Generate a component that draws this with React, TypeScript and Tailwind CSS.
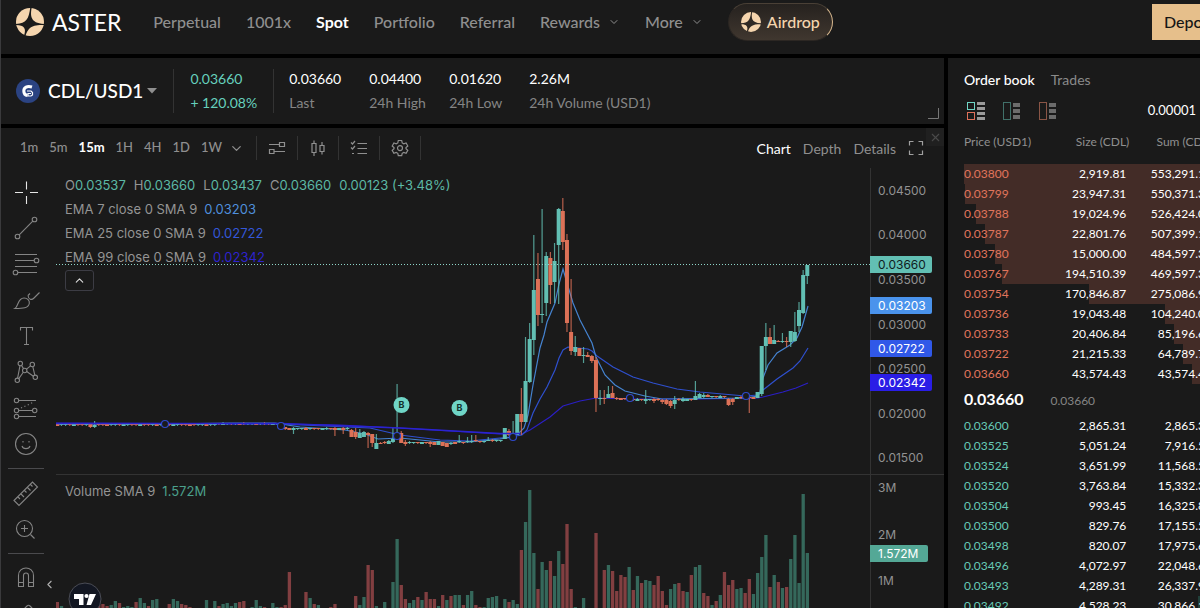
import React, { useState } from 'react';
import { ChevronDown, ChevronUp, ChevronLeft, X } from 'lucide-react';

type Level = { price: string; size: string; sum: string };
// [index, high, body top, body bottom, low, up]
type Candle = [number, number, number, number, number, number];

const UP = '#62bfb3';
const DOWN = '#dc7157';
const STEP = 4.1436;
const FIRST_X = 1.3;
const TOP = 168;

const navItems = ['Perpetual', '1001x', 'Spot', 'Portfolio', 'Referral', 'Rewards', 'More'];

const stats = [
  { value: '0.03660', label: 'Last' },
  { value: '0.04400', label: '24h High' },
  { value: '0.01620', label: '24h Low' },
  { value: '2.26M', label: '24h Volume (USD1)' },
];

const intervals = ['1m', '5m', '15m', '1H', '4H', '1D', '1W'];

const asks: Level[] = [
  { price: '0.03800', size: '2,919.81', sum: '553,291.18' },
  { price: '0.03799', size: '23,947.31', sum: '550,371.37' },
  { price: '0.03788', size: '19,024.96', sum: '526,424.06' },
  { price: '0.03787', size: '22,801.76', sum: '507,399.10' },
  { price: '0.03780', size: '15,000.00', sum: '484,597.34' },
  { price: '0.03767', size: '194,510.39', sum: '469,597.34' },
  { price: '0.03754', size: '170,846.87', sum: '275,086.95' },
  { price: '0.03736', size: '19,043.48', sum: '104,240.08' },
  { price: '0.03733', size: '20,406.84', sum: '85,196.60' },
  { price: '0.03722', size: '21,215.33', sum: '64,789.76' },
  { price: '0.03660', size: '43,574.43', sum: '43,574.43' },
];

const bids: Level[] = [
  { price: '0.03600', size: '2,865.31', sum: '2,865.31' },
  { price: '0.03525', size: '5,051.24', sum: '7,916.55' },
  { price: '0.03524', size: '3,651.99', sum: '11,568.54' },
  { price: '0.03520', size: '3,763.84', sum: '15,332.38' },
  { price: '0.03504', size: '993.45', sum: '16,325.83' },
  { price: '0.03500', size: '829.76', sum: '17,155.59' },
  { price: '0.03498', size: '820.07', sum: '17,975.66' },
  { price: '0.03496', size: '4,072.97', sum: '22,048.63' },
  { price: '0.03493', size: '4,289.31', sum: '26,337.94' },
  { price: '0.03492', size: '4,528.23', sum: '30,866.17' },
];

// positive = up bar, negative = down bar
const volumes = [
  -6, 2, 0, 0, 3, -4, 5, 3, -2, 4, -3, -4, -2, 3, 7, -5, 1, 2, 1, -6,
  10, 5, -2, 8, 9, 0, 0, -4, 9, 7, -4, -3, -1, 0, 0, 0, 8, 0, 7, -2,
  4, 5, 2, 5, -6, -7, 0, 1, 8, 2, -1, 0, 5, 1, -1, -3, -36, 0, 0, 0,
  -16, 10, -4, 3, 0, 0, -1, -4, 0, 0, 0, 0, -12, 3, 11, -43, -38, 2, 0, 6,
  0, 26, 69, -23, -9, 5, 8, -11, 8, -16, -9, -9, 2, -13, 8, -12, 13, 13, -3, 13,
  17, -3, -1, 1, 10, 11, 12, 0, 9, -6, 8, 4, -58, 86, 118, 55, -19, 46, 38, -47,
  32, 57, -44, -84, -19, 1, 0, 10, 0, 0, -75, 0, -38, 43, -37, -17, -33, -31, 41, -18,
  32, -25, 28, 27, -23, -32, -17, -3, 19, 24, -25, -17, 16, -33, 41, 43, -15, -12, 3, -7,
  13, -36, -23, -28, 19, 20, -15, -29, 14, 35, 51, 73, -21, 33, -26, 20, -21, 49, 73, 25,
  114, 55,
];

const bigCandles: Candle[] = [
  [8, 424, 424, 427, 428, 0], [9, 421, 425, 427, 428, 1],
  [55, 427, 427, 429, 430, 0], [57, 427, 428, 430, 434, 1], [67, 427, 428, 430, 436, 0],
  [69, 427, 428, 430, 434, 0], [71, 429, 430, 437, 437, 0], [72, 428, 432, 437, 439, 0],
  [73, 429, 433, 438, 438, 1], [74, 431, 432, 437, 437, 1], [75, 432, 433, 435, 448, 0],
  [76, 434, 434, 443, 447, 0], [77, 434, 443, 449, 449, 1], [78, 442, 443, 444, 444, 0],
  [79, 441, 442, 443, 444, 0], [80, 440, 441, 444, 444, 1], [81, 428, 439, 442, 443, 1],
  [82, 384, 433, 439, 440, 1], [83, 431, 433, 443, 443, 0], [84, 440, 442, 444, 446, 0],
  [90, 441, 442, 444, 447, 0], [91, 442, 442, 445, 445, 0], [92, 441, 441, 445, 445, 1],
  [93, 442, 442, 446, 446, 0], [94, 443, 443, 447, 447, 0], [95, 442, 443, 444, 445, 1],
  [97, 435, 441, 442, 443, 1], [99, 437, 441, 442, 443, 1], [100, 435, 441, 442, 443, 1],
  [101, 435, 440, 441, 442, 0], [104, 437, 440, 441, 441, 1],
  [108, 428, 428, 439, 439, 1], [109, 429, 431, 435, 436, 0], [110, 421, 434, 435, 435, 1],
  [111, 414, 414, 435, 435, 1], [112, 388, 414, 422, 435, 0], [113, 337, 381, 422, 422, 1],
  [114, 323, 339, 382, 383, 1], [115, 235, 290, 340, 355, 1], [116, 253, 279, 315, 326, 0],
  [117, 209, 314, 315, 323, 1], [118, 252, 256, 303, 316, 1], [119, 252, 258, 285, 304, 0],
  [120, 243, 261, 282, 303, 1], [121, 208, 209, 245, 304, 1], [122, 198, 211, 242, 250, 0],
  [123, 234, 240, 323, 332, 0], [124, 279, 332, 351, 355, 0], [125, 336, 347, 352, 356, 1],
  [126, 348, 348, 356, 356, 0], [127, 347, 355, 356, 363, 1], [128, 352, 355, 357, 357, 0],
  [129, 355, 356, 361, 363, 0], [130, 357, 360, 398, 412, 0], [131, 390, 398, 399, 405, 1],
  [132, 390, 398, 399, 404, 0], [133, 386, 394, 398, 398, 1], [134, 386, 393, 398, 398, 0],
  [142, 390, 399, 401, 404, 1], [144, 398, 399, 401, 403, 0], [146, 399, 400, 402, 404, 0],
  [147, 399, 400, 404, 405, 0], [148, 400, 401, 406, 408, 0], [149, 396, 400, 404, 409, 1],
  [151, 397, 399, 401, 402, 1], [154, 381, 396, 400, 400, 1], [155, 393, 394, 398, 398, 1],
  [156, 393, 395, 397, 398, 1], [157, 394, 395, 397, 397, 0], [162, 398, 399, 405, 406, 0],
  [163, 398, 399, 402, 405, 0], [167, 397, 397, 398, 413, 0], [169, 392, 392, 398, 398, 1],
  [170, 346, 346, 394, 396, 1], [171, 323, 337, 346, 370, 1], [172, 328, 337, 344, 344, 0],
  [173, 325, 340, 344, 344, 1], [174, 340, 341, 342, 342, 0], [175, 333, 341, 342, 343, 1],
  [176, 337, 341, 342, 347, 0], [177, 331, 331, 342, 347, 1], [178, 312, 332, 341, 342, 1],
  [179, 302, 310, 326, 332, 1], [180, 270, 275, 313, 314, 1], [181, 265, 265, 276, 284, 1],
];

// quiet stretches between the larger moves
const baseline = (i: number) => {
  if (i < 55) return 424 - (i > 38 ? 1 : 0);
  if (i < 71) return 428;
  if (i < 96) return 442;
  if (i < 108) return 442 - Math.floor((i - 96) / 4);
  if (i < 155) return 398 + (i > 138 ? 1 : 0);
  if (i < 162) return 396;
  return 397;
};

const drawn = new Set(bigCandles.map((c) => c[0]));
const quietCandles: Candle[] = volumes
  .map((v, i): Candle => {
    const y = baseline(i);
    const tall = (i * 7) % 5 === 0 ? 1 : 0;
    return [i, y - tall, y, y + 1 + ((i * 3) % 4 === 0 ? 1 : 0), y + 2, v >= 0 && i % 3 !== 0 ? 1 : 0];
  })
  .filter((c) => !drawn.has(c[0]));

const candles = [...quietCandles, ...bigCandles];

const ema7 =
  'M56 424L165 424L230 423L275 423L300 427L345 430L365 434L378 439L400 438L440 442L470 442L500 439L512 437L518 434L524 428L528 415L533 385L540 348L544 335L547 322L555 303L559 284L563 269L567 283L573 303L580 320L592 343L596 357L605 375L615 385L625 391L645 396L662 399L745 398L758 396L760 392L763 378L768 365L777 353L790 345L797 338L802 327L808 306';
const ema25 =
  'M56 424L280 424L370 428L400 435L440 440L470 441L510 437L522 435L527 430L533 413L540 399L547 387L555 370L559 358L563 350L568 347L588 349L592 351L597 356L613 367L633 377L653 383L677 389L700 392L745 396L758 395L763 390L777 379L793 368L800 361L808 348';
const ema99 =
  'M56 423L280 424L340 425L400 428L450 431L500 434L522 434L530 430L550 417L563 406L580 401L596 398L630 399L700 399L758 398L763 397L783 392L796 388L808 383';

const handles = [[165, 424], [281, 426], [397, 436], [513, 437], [630, 398], [746, 396]];
const trades = [[401, 405], [459, 408]];

const axisLabels = [
  ['0.04500', 190], ['0.04000', 234], ['0.03500', 279], ['0.03000', 324], ['0.02500', 368],
  ['0.02000', 413], ['0.01500', 457], ['3M', 487], ['2M', 534], ['1M', 580],
] as [string, number][];

const axisTags = [
  { text: '0.03660', y: 264, w: 62, bg: '#62bfb3', fg: '#10201e' },
  { text: '0.03203', y: 305, w: 62, bg: '#4a93ec', fg: '#ffffff' },
  { text: '0.02722', y: 348, w: 62, bg: '#3058e8', fg: '#ffffff' },
  { text: '0.02342', y: 382, w: 62, bg: '#2a1de6', fg: '#ffffff' },
  { text: '1.572M', y: 553, w: 58, bg: '#54a896', fg: '#ffffff' },
];

const AsterMark = ({ className, hole }: { className: string; hole: string }) => (
  <svg className={className} viewBox="0 0 28 28" aria-hidden="true">
    <circle cx="14" cy="14" r="14" fill="#f5d5ae" />
    <path
      d="M14.2 0L15.6 0C14.4 7 13.9 15.3 28 15.9V17C15 17 12.6 19.5 9.4 28L8.1 27.6C10.4 20.5 8.5 17 0 17V15.9C10.5 15.3 12.7 11 14.2 0Z"
      fill={hole}
    />
  </svg>
);

const toolIcons: { name: string; art: React.ReactNode; color?: string }[] = [
  { name: 'Cross', color: '#e6e6e6', art: <path d="M14.5 3.5V11.5M14.5 18V26M3 14.5H11M18 14.5H26" /> },
  {
    name: 'Trend line',
    art: <><circle cx="5.5" cy="22.5" r="2.3" /><circle cx="22.5" cy="5.5" r="2.3" /><path d="M7.2 20.8L20.8 7.2" /></>,
  },
  {
    name: 'Fib retracement',
    art: <><path d="M3 4.5H25M3 10.5H22.2M3 16.5H25M5.8 22.5H25" /><circle cx="24.5" cy="10.5" r="2.3" /><circle cx="3.5" cy="22.5" r="2.3" /></>,
  },
  {
    name: 'Brush',
    art: <path d="M3 22.5C6.5 20.5 5.5 12 12 12C15.5 12 17.8 14.5 17.3 17.5C16.5 22 11 22.5 3 22.5ZM16 9.5C16.5 13.5 19.5 14.5 22 12L27.5 6.5M16 9.5L18 7.5" />,
  },
  { name: 'Text', art: <path d="M8.5 8.5V5.5H20.5V8.5M14.5 5.5V22.5M12 22.5H17" /> },
  {
    name: 'Pattern',
    art: (
      <>
        <circle cx="8.3" cy="5.5" r="2.2" /><circle cx="20.3" cy="6.5" r="2.2" />
        <circle cx="12.7" cy="12.5" r="2.2" /><circle cx="5.3" cy="22.3" r="2.2" /><circle cx="23.3" cy="19.3" r="2.2" />
        <path d="M8 7.7L5.6 20.1M9.5 7.4L11.5 10.6M14.5 11.2L18.6 7.8M20.8 8.7L22.8 17.1M6.8 20.6L11.3 14.3M14.7 13.5L21.4 18.2" />
      </>
    ),
  },
  {
    name: 'Forecast',
    art: (
      <>
        <circle cx="4.5" cy="6.5" r="2.2" /><circle cx="4.5" cy="16.5" r="2.2" />
        <circle cx="22.7" cy="16.5" r="2.2" /><circle cx="4.5" cy="22.5" r="2.2" />
        <path d="M6.7 6.5H24M6.7 16.5H20.5M6.7 22.5H24" />
        <path d="M9 14L22 8" strokeDasharray="1.2 2.5" />
      </>
    ),
  },
  {
    name: 'Icons',
    art: <><circle cx="14" cy="14" r="10.5" /><path d="M10 16C11 19.5 17 19.5 18 16M11 11V12.5M17 11V12.5" /></>,
  },
];

const lowerIcons: { name: string; art: React.ReactNode }[] = [
  {
    name: 'Measure',
    art: <path d="M2 21.5L20.5 3L25.5 8L7 26.5ZM6 18L8 20M9 15L12 18M12.5 11.5L14.5 13.5M15.5 8.5L18.5 11.5M18.5 5.5L20.5 7.5" />,
  },
  { name: 'Zoom in', art: <><circle cx="12.5" cy="13.5" r="8" /><path d="M18.5 19.5L22.5 23.5M12.5 10V17M9 13.5H16" /></> },
];

const ToolButton = ({ name, art, color = '#858585' }: { name: string; art: React.ReactNode; color?: string }) => (
  <button aria-label={name} className="flex h-9 w-full shrink-0 items-center justify-center">
    <svg width="28" height="28" viewBox="0 0 28 28" fill="none" stroke={color} strokeWidth="1.1">{art}</svg>
  </button>
);

const DrawingTools = () => (
  <div className="flex w-[50px] shrink-0 flex-col pt-[6px]">
    {toolIcons.map((t) => <ToolButton key={t.name} {...t} />)}
    <div className="mx-[7px] my-[6px] h-px shrink-0 bg-[#4a4a4d]" />
    {lowerIcons.map((t) => <ToolButton key={t.name} {...t} />)}
    <div className="mx-[7px] mt-[6px] mb-[5px] h-px shrink-0 bg-[#4a4a4d]" />
    <ToolButton
      name="Magnet"
      art={<path d="M6.5 23.5V12.5C6.5 2.5 21.5 2.5 21.5 12.5V23.5H16.5V12.5C16.5 9.2 11.5 9.2 11.5 12.5V23.5ZM6.5 19.5H11.5M16.5 19.5H21.5" />}
    />
    <ToolButton name="Draw" art={<path d="M5 22L6 16L15 7C16 6 17 6 18 7L19.5 8.5C20.5 9.5 20.5 10.5 19.5 11.5L11 20M13 9L18 14" />} />
  </div>
);

const Plot = () => (
  <svg className="absolute inset-0 h-full w-full" aria-label="Price chart">
    <g transform={`translate(0 ${-TOP})`}>
      {volumes.map((v, i) => (
        <rect key={i} x={FIRST_X + i * STEP - 1.6} y={608 - Math.abs(v)} width="3.3" height={Math.abs(v)} fill={v > 0 ? '#35685b' : '#823f41'} />
      ))}
      <g transform="translate(-56 0)">
        <path d={ema99} fill="none" stroke="#2b1fc4" strokeWidth="1.2" />
        <path d={ema25} fill="none" stroke="#2f50cf" strokeWidth="1.2" />
        <path d={ema7} fill="none" stroke="#4583d0" strokeWidth="1.2" />
      </g>
      {candles.map(([i, high, top, bottom, low, up]) => {
        const x = FIRST_X + i * STEP;
        return (
          <g key={i} fill={up ? UP : DOWN}>
            <rect x={x - 0.6} y={high} width="1.2" height={low - high} opacity="0.8" />
            <rect x={x - 2} y={top} width="4" height={Math.max(bottom - top, 1)} />
          </g>
        );
      })}
      <g transform="translate(-56 0)">
        <path d="M56 423.5H281L400 428L500 433.500H520" fill="none" stroke="#2b23d0" strokeWidth="1.4" />
        {handles.map(([x, y]) => (
          <circle key={x} cx={x} cy={y} r="3.5" fill="#1a1a1a" stroke="#2f49cc" strokeWidth="1.2" />
        ))}
        {trades.map(([x, y]) => (
          <g key={x}>
            <circle cx={x + 0.5} cy={y} r="8" fill="#6fd5c6" />
            <text x={x + 0.5} y={y + 3} textAnchor="middle" fontSize="9" fontWeight="700" fill="#12302b" fontFamily="Inter, sans-serif">B</text>
          </g>
        ))}
      </g>
      <line x1="0" x2="100%" y1="264.5" y2="264.5" stroke="#8fd6c9" strokeDasharray="1 2" />
      <line x1="0" x2="100%" y1="474.5" y2="474.5" stroke="#333333" />
    </g>
  </svg>
);

const PriceAxis = () => (
  <svg className="h-full w-[74px] shrink-0" fontFamily="Inter, sans-serif" fontSize="12" aria-label="Price axis">
    <g transform={`translate(0 ${-TOP})`}>
      <path d="M0.5 168V608M0 474.5H74" stroke="#333333" fill="none" />
      {axisLabels.map(([text, y]) => (
        <text key={text} x="8" y={y + 5} fill="#929292">{text}</text>
      ))}
      {axisTags.map((t) => (
        <g key={t.text}>
          <path d={`M0 ${t.y - 8}H${t.w - 2}q2 0 2 2v13q0 2 -2 2H0Z`} fill={t.bg} />
          <text x="8" y={t.y + 5} fill={t.fg}>{t.text}</text>
        </g>
      ))}
    </g>
  </svg>
);

const ohlc = [['O', '0.03537'], ['H', '0.03660'], ['L', '0.03437'], ['C', '0.03660']];

const Legend = () => (
  <div className="absolute top-[6px] left-[9px] font-['Inter',sans-serif] text-[13px] text-[#949494]">
    <div className="flex h-6 items-center gap-2 text-[#5cb8a5]">
      {ohlc.map(([k, v]) => (
        <span key={k}><span className="text-[#949494]">{k}</span>{v}</span>
      ))}
      <span>0.00123 (+3.48%)</span>
    </div>
    <div className="flex h-6 items-center gap-[7px]">EMA 7 close 0 SMA 9 <span className="text-[#4f8fdc]">0.03203</span></div>
    <div className="flex h-6 items-center gap-[7px]">EMA 25 close 0 SMA 9 <span className="text-[#3457d8]">0.02722</span></div>
    <div className="flex h-6 items-center gap-[7px]">EMA 99 close 0 SMA 9 <span className="text-[#2e22cc]">0.02342</span></div>
    <button aria-label="Collapse legend" className="flex h-[21px] w-[29px] items-center justify-center rounded-[3px] border border-[#3c3c44] text-[#dcdcdc]">
      <ChevronUp size={13} />
    </button>
  </div>
);

const toolbarIcons: { name: string; art: React.ReactNode }[] = [
  { name: 'Indicators', art: <path d="M1 5.5H11.5M11.5 3.5H16.5V7.5H11.5ZM6.5 12.5H17M1.5 10.5H6V14.5H1.5Z" /> },
  { name: 'Candles', art: <path d="M3 4.5H7V13.5H3ZM5 1.5V4.5M5 13.5V17M11 6.5H15V12.5H11ZM13 3V6.5M13 12.5V15.5" /> },
  { name: 'Display', art: <path d="M1 3.5L2.5 5L5 2M1 8.5L2.5 10L5 7M7.5 4.5H17M7.5 9.5H17M7.5 14.5H17M2 14.5H4" /> },
  {
    name: 'Settings',
    art: (
      <>
        <path d="M7.3 1.5H10.7L11.2 3.9L12.8 4.8L15.1 4L16.8 7L15 8.6V9.7L16.8 11.3L15.1 14.2L12.8 13.4L11.2 14.3L10.7 16.7H7.3L6.8 14.3L5.2 13.4L2.9 14.2L1.2 11.3L3 9.7V8.6L1.2 7L2.9 4L5.2 4.8L6.8 3.9Z" />
        <circle cx="9" cy="9.1" r="2.5" />
      </>
    ),
  },
];

const ChartPanel = () => {
  const [interval, setInterval] = useState('15m');
  const [view, setView] = useState('Chart');

  return (
    <section className="relative flex min-h-0 flex-1 flex-col bg-[#1a1a1a]">
      <div className="flex h-10 shrink-0 items-center pl-[19px] text-[14px] text-[#8f8f8f]">
        <div className="flex items-center gap-[11px] text-[13px]">
          {intervals.map((i) => (
            <button key={i} onClick={() => setInterval(i)} className={i === interval ? 'font-bold text-white' : 'font-medium'}>{i}</button>
          ))}
          <button aria-label="More intervals" className="-ml-1"><ChevronDown size={15} /></button>
        </div>
        <div className="ml-3 flex items-center">
          {toolbarIcons.map((t) => (
            <button key={t.name} aria-label={t.name} className="flex h-6 w-[41px] items-center justify-center border-l border-[#333]">
              <svg width="18" height="18" viewBox="0 0 18 18" fill="none" stroke="#8f8f8f" strokeWidth="1.2">{t.art}</svg>
            </button>
          ))}
          <span className="h-6 w-px bg-[#333]" />
        </div>
        <div className="ml-auto flex items-center gap-3 pr-5">
          {['Chart', 'Depth', 'Details'].map((v) => (
            <button key={v} onClick={() => setView(v)} className={v === view ? 'text-white' : ''}>{v}</button>
          ))}
          <button aria-label="Fullscreen">
            <svg width="16" height="16" viewBox="0 0 16 16" fill="none" stroke="#a0a0a0" strokeWidth="1.2">
              <path d="M1.5 5.5V1.5H5.5M10.5 1.5H14.5V5.5M14.5 10.5V14.5H10.5M5.5 14.5H1.5V10.5" />
            </svg>
          </button>
        </div>
      </div>
      <button aria-label="Close" className="absolute top-0 right-0 flex h-[18px] w-[18px] items-center justify-center bg-[#202020] text-[#4a4a4a]"><X size={13} /></button>
      <div className="flex min-h-0 flex-1 overflow-hidden">
        <DrawingTools />
        <div className="relative w-[5px] shrink-0">
          <button aria-label="Hide tools" className="absolute top-[410px] -left-2 text-[#b0b0b0]"><ChevronLeft size={13} /></button>
        </div>
        <div className="relative min-w-0 flex-1">
          <Plot />
          <Legend />
          <div className="absolute top-[317px] left-[9px] flex gap-[7px] font-['Inter',sans-serif] text-[13px] leading-none text-[#949494]">
            Volume SMA 9<span className="text-[#4ba08c]">1.572M</span>
          </div>
          <a href="#tradingview" aria-label="TradingView" className="absolute top-[414px] left-3">
            <svg width="34" height="34" viewBox="0 0 34 34">
              <circle cx="17" cy="17" r="16" fill="#131722" stroke="#4a4c55" />
              <path d="M6 12H15.5V23H11V17H6ZM21.5 12H28L23 23H18.5Z" fill="#fff" />
              <circle cx="18.5" cy="14" r="2.1" fill="#fff" />
            </svg>
          </a>
        </div>
        <PriceAxis />
      </div>
    </section>
  );
};

const BookIcon = ({ colors, split }: { colors: string[]; split?: boolean }) => (
  <svg width="20" height="20" viewBox="0 0 20 20" fill="none">
    {split ? (
      <>
        <rect x="1.5" y="1.5" width="7" height="7" stroke={colors[0]} />
        <rect x="1.5" y="11.5" width="7" height="7" stroke={colors[1]} />
        <path d="M11 2.5H19M11 7.5H19M11 12.5H19M11 17.5H19" stroke="#9a9a9a" strokeWidth="3" />
      </>
    ) : (
      <>
        <rect x="1.5" y="1.5" width="7" height="17" stroke={colors[0]} />
        <path d="M11 4H18M11 10H18M11 16H18" stroke="#6c6c6c" strokeWidth="4" />
      </>
    )}
  </svg>
);

const maxSum = 553291;

const LevelRow = ({ level, color, bar }: { level: Level; color: string; bar: string }) => {
  const pct = (parseFloat(level.sum.replace(/,/g, '')) / maxSum) * 100;
  return (
    <tr className="h-5" style={{ background: `linear-gradient(to left, ${bar} ${pct}%, transparent ${pct}%)` }}>
      <td className={`p-0 ${color}`}>{level.price}</td>
      <td className="p-0 pr-[3px] text-right">{level.size}</td>
      <td className="p-0 text-right">{level.sum}</td>
    </tr>
  );
};

const OrderBook = () => {
  const [tab, setTab] = useState('Order book');
  return (
    <aside className="-mr-7 w-[280px] shrink-0 overflow-hidden bg-[#1a1a1a] px-4 pt-2">
      <div className="flex h-[26px] items-center gap-4 text-[14px]">
        {['Order book', 'Trades'].map((t) => (
          <button key={t} onClick={() => setTab(t)} className={t === tab ? 'font-medium text-white' : 'text-[#8a8a8a]'}>{t}</button>
        ))}
      </div>
      <div className="flex h-[38px] items-center gap-4 pl-[2px]">
        <button aria-label="Both sides"><BookIcon split colors={['#6fd5c6', '#e0705a']} /></button>
        <button aria-label="Bids"><BookIcon colors={['#41716a']} /></button>
        <button aria-label="Asks"><BookIcon colors={['#8a5546']} /></button>
        <button className="mr-4 ml-auto text-[13px] text-white">0.00001</button>
      </div>
      <table className="w-full table-fixed border-collapse text-[12px] leading-5 text-white">
        <thead>
          <tr className="h-[34px] text-[#8f8f8f]">
            <th className="p-0 pb-[10px] text-left font-normal">Price (USD1)</th>
            <th className="p-0 pb-[10px] text-right font-normal">Size (CDL)</th>
            <th className="p-0 pb-[10px] text-right font-normal">Sum (CDL)</th>
          </tr>
        </thead>
        <tbody>
          {asks.map((l) => <LevelRow key={l.price} level={l} color="text-[#e0755c]" bar="#432c27" />)}
          <tr className="h-8">
            <td colSpan={3} className="p-0">
              <span className="mr-[27px] text-[16px] font-bold">0.03660</span>
              <span className="text-[#858585]">0.03660</span>
            </td>
          </tr>
          {bids.map((l) => <LevelRow key={l.price} level={l} color="text-[#66c9b6]" bar="#20403a" />)}
        </tbody>
      </table>
    </aside>
  );
};

const Header = () => (
  <header className="flex h-[54px] shrink-0 items-center bg-[#1a1a1a] pb-[10px] pl-[15px]">
    <a href="#home" className="mr-8 flex items-center gap-2 text-[23px] text-white">
      <AsterMark className="h-7 w-7" hole="#1a1a1a" />
      ASTER
    </a>
    <nav className="flex items-center gap-[25px] text-[16px] font-medium text-[#8f8f8f]">
      {navItems.map((n) => (
        <a key={n} href={`#${n.toLowerCase()}`} className={n === 'Spot' ? 'flex items-center font-bold text-white' : 'flex items-center gap-2'}>
          {n}
          {(n === 'Rewards' || n === 'More') && <ChevronDown size={12} strokeWidth={2} />}
        </a>
      ))}
    </nav>
    <a
      href="#airdrop"
      className="ml-[25px] flex h-[38px] items-center gap-[6px] rounded-full border border-[#2c2723] border-t-[#4a4036] border-r-[#d9b98f] bg-linear-to-b from-[#26221f] to-[#40372f] px-3 text-[16px] font-medium text-[#f5d5ae]"
    >
      <AsterMark className="h-5 w-5" hole="#2f2924" />
      Airdrop
    </a>
    <button className="-mr-[42px] ml-auto h-9 w-[90px] shrink-0 bg-[#e6bf8b] pl-3 text-left text-[16px] font-medium text-[#151515]">Deposit</button>
  </header>
);

const Ticker = () => (
  <section className="relative flex h-[66px] shrink-0 items-center bg-[#1a1a1a] pl-[15px] text-[14px] leading-6">
    <button className="flex items-center text-[19px] font-medium text-white">
      <svg className="mr-2" width="24" height="24" viewBox="0 0 24 24">
        <circle cx="12" cy="12" r="12" fill="#2b4382" />
        <path d="M16 8C11 6.400 7.800 8.500 7.800 12C7.800 15 9.500 16.300 11.500 16.500" fill="none" stroke="#fff" strokeWidth="3" />
        <path d="M11 12H15L16.500 13.500V16L15 17H12V14.500H15" fill="none" stroke="#fff" strokeWidth="1.2" />
      </svg>
      CDL/USD1
      <svg className="ml-1" width="10" height="6" viewBox="0 0 10 6"><path d="M0 0H10L5 5.5Z" fill="#8f8f8f" /></svg>
    </button>
    <div className="ml-4 h-11 w-px bg-[#333]" />
    <div className="mx-4 text-[#66d0bd]">
      <div>0.03660</div>
      <div>+ 120.08%</div>
    </div>
    <div className="mr-[15px] h-11 w-px bg-[#333]" />
    {stats.map((s) => (
      <div key={s.label} className="min-w-20 whitespace-nowrap">
        <div className="text-white">{s.value}</div>
        <div className="text-[#858585]">{s.label}</div>
      </div>
    ))}
    <svg className="absolute right-[5px] bottom-[5px]" width="11" height="11" viewBox="0 0 11 11"><path d="M0 10.5H10.5V0" fill="none" stroke="#777" /></svg>
  </section>
);

const App: React.FC = () => (
  <div className="flex h-screen flex-col gap-1 overflow-hidden border-l border-[#3a3a3c] bg-black font-['Lato',sans-serif]">
    <Header />
    <main className="flex min-h-0 flex-1 gap-1">
      <div className="flex min-w-0 flex-1 flex-col gap-1">
        <Ticker />
        <ChartPanel />
      </div>
      <OrderBook />
    </main>
  </div>
);

export default App;
